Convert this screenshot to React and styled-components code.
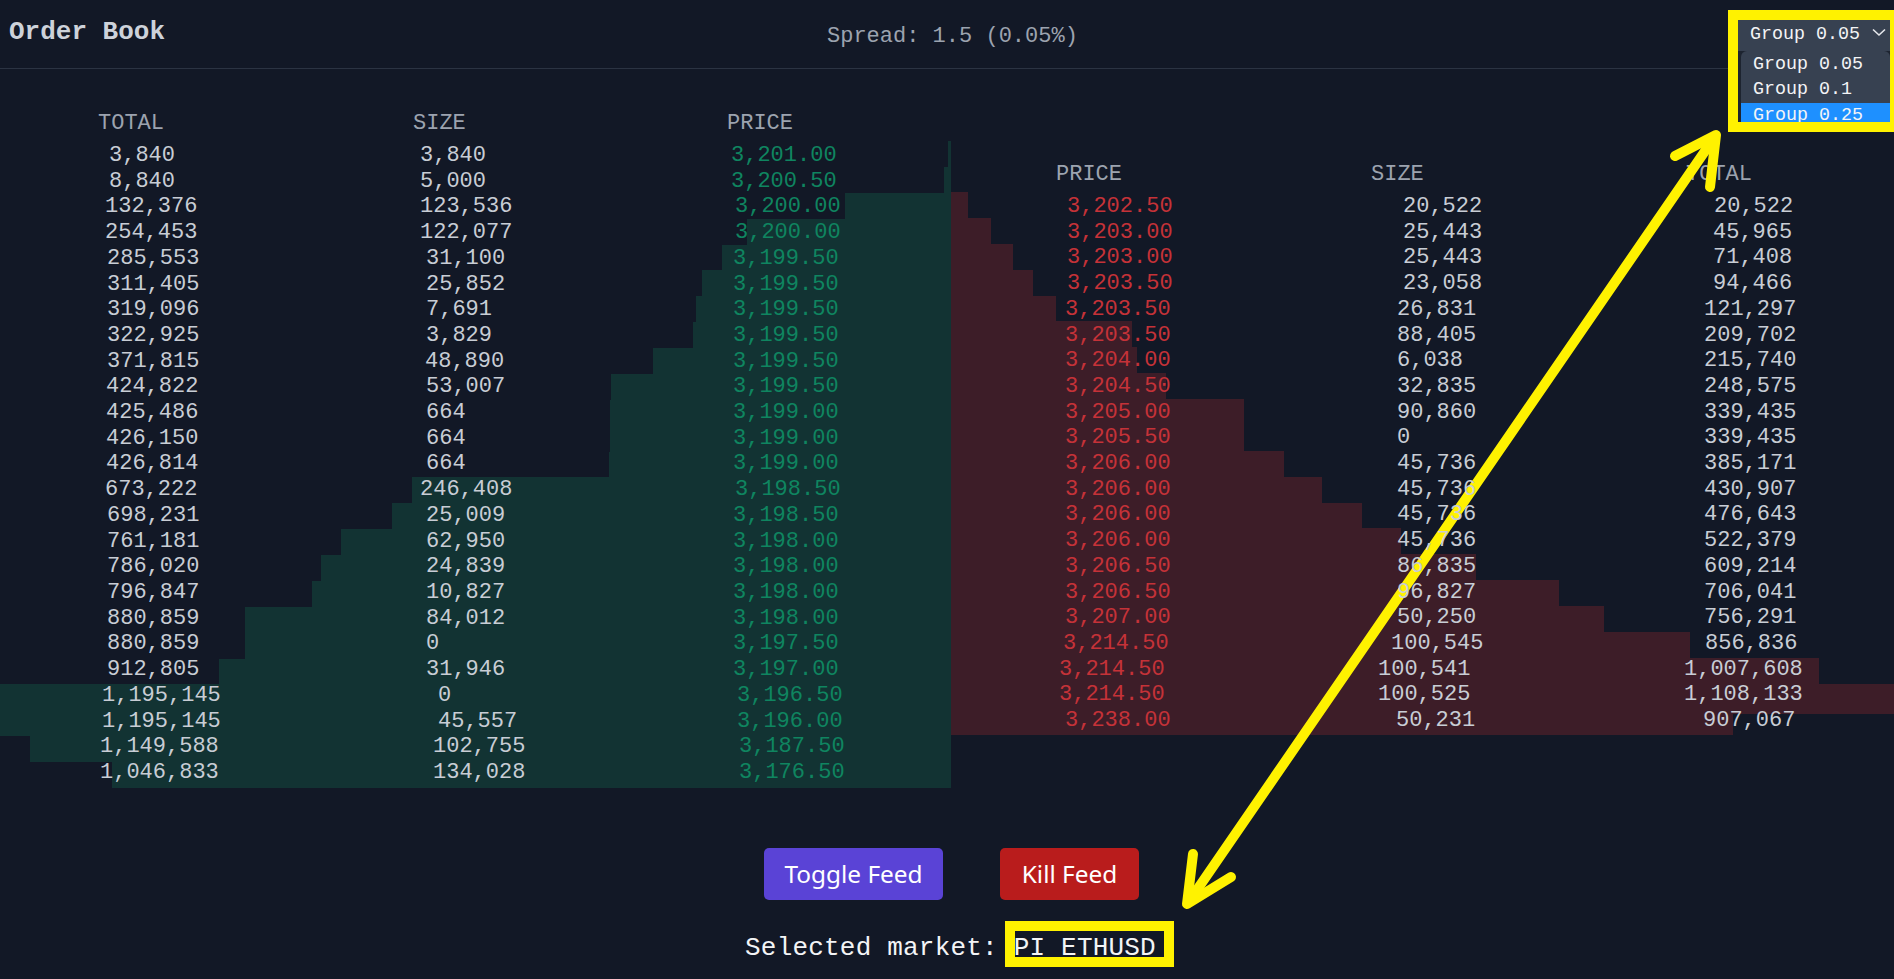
import React from 'react'
import styled, { createGlobalStyle } from 'styled-components'

const GlobalStyle = createGlobalStyle`
  html, body { margin: 0; padding: 0; background: #121826; }
  body { width: 1894px; height: 979px; overflow: hidden; }
`

const MONO = `"Liberation Mono", "DejaVu Sans Mono", monospace`

const ROW_H = 25.88
// the text lines step a little tighter than the depth bars
const TEXT_DRIFT = 0.17

// [total, size, price, text x for each column, bar width]
const bids = [
  ['3,840', '3,840', '3,201.00', 109, 420, 731, 3],
  ['8,840', '5,000', '3,200.50', 109, 420, 731, 7],
  ['132,376', '123,536', '3,200.00', 105, 420, 735, 106],
  ['254,453', '122,077', '3,200.00', 105, 420, 735, 204],
  ['285,553', '31,100', '3,199.50', 107, 426, 733, 229],
  ['311,405', '25,852', '3,199.50', 107, 426, 733, 249],
  ['319,096', '7,691', '3,199.50', 107, 426, 733, 255],
  ['322,925', '3,829', '3,199.50', 107, 426, 733, 258],
  ['371,815', '48,890', '3,199.50', 107, 425, 733, 298],
  ['424,822', '53,007', '3,199.50', 106, 426, 733, 340],
  ['425,486', '664', '3,199.00', 106, 426, 733, 341],
  ['426,150', '664', '3,199.00', 106, 426, 733, 341],
  ['426,814', '664', '3,199.00', 106, 426, 733, 342],
  ['673,222', '246,408', '3,198.50', 105, 420, 735, 539],
  ['698,231', '25,009', '3,198.50', 107, 426, 733, 559],
  ['761,181', '62,950', '3,198.00', 107, 426, 733, 610],
  ['786,020', '24,839', '3,198.00', 107, 426, 733, 630],
  ['796,847', '10,827', '3,198.00', 107, 426, 733, 639],
  ['880,859', '84,012', '3,198.00', 107, 426, 733, 706],
  ['880,859', '0', '3,197.50', 107, 426, 733, 706],
  ['912,805', '31,946', '3,197.00', 107, 426, 733, 732],
  ['1,195,145', '0', '3,196.50', 102, 438, 737, 951],
  ['1,195,145', '45,557', '3,196.00', 102, 438, 737, 951],
  ['1,149,588', '102,755', '3,187.50', 100, 433, 739, 921],
  ['1,046,833', '134,028', '3,176.50', 100, 433, 739, 839],
]

// [price, size, total, text x for each column, bar width]
const asks = [
  ['3,202.50', '20,522', '20,522', 116, 452, 763, 17],
  ['3,203.00', '25,443', '45,965', 116, 452, 762, 40],
  ['3,203.00', '25,443', '71,408', 116, 452, 762, 62],
  ['3,203.50', '23,058', '94,466', 116, 452, 762, 82],
  ['3,203.50', '26,831', '121,297', 114, 446, 753, 105],
  ['3,203.50', '88,405', '209,702', 114, 446, 753, 181],
  ['3,204.00', '6,038', '215,740', 114, 446, 753, 186],
  ['3,204.50', '32,835', '248,575', 114, 446, 753, 215],
  ['3,205.00', '90,860', '339,435', 114, 446, 753, 293],
  ['3,205.50', '0', '339,435', 114, 446, 753, 293],
  ['3,206.00', '45,736', '385,171', 114, 446, 753, 333],
  ['3,206.00', '45,736', '430,907', 114, 446, 753, 371],
  ['3,206.00', '45,736', '476,643', 114, 446, 753, 411],
  ['3,206.00', '45,736', '522,379', 114, 446, 753, 450],
  ['3,206.50', '86,835', '609,214', 114, 446, 753, 525],
  ['3,206.50', '96,827', '706,041', 114, 446, 753, 608],
  ['3,207.00', '50,250', '756,291', 114, 446, 753, 653],
  ['3,214.50', '100,545', '856,836', 112, 440, 754, 739],
  ['3,214.50', '100,541', '1,007,608', 108, 427, 733, 868],
  ['3,214.50', '100,525', '1,108,133', 108, 427, 733, 943, true],
  ['3,238.00', '50,231', '907,067', 114, 445, 752, 782],
]

const Page = styled.div`
  width: 1894px;
  height: 979px;
  background: #121826;
  color: #c8cdd5;
  font-family: ${MONO};
  position: relative;
  overflow: hidden;
`

const TopBar = styled.header`
  height: 69px;
  box-sizing: border-box;
  border-bottom: 1px solid #2b3342;
  display: flex;
  align-items: flex-start;
  padding-left: 9px;
`

const Title = styled.h1`
  margin: 17px 0 0;
  width: 818px;
  font-size: 26px;
  line-height: 30px;
  font-weight: 700;
  color: #cdd2da;
`

const Spread = styled.div`
  margin-top: 24px;
  font-size: 22px;
  line-height: 26px;
  color: #9ca3af;
`

const Book = styled.section`
  display: flex;
  align-items: flex-start;
  padding-top: 40px;
`

const BidColumn = styled.div`
  width: 951px;
  flex: none;
`

const AskColumn = styled.div`
  flex: 1;
  margin-top: 51px;
  min-width: 0;
`

const HeaderRow = styled.div`
  display: grid;
  grid-template-columns: ${p => p.$cols};
  padding-left: ${p => p.$left}px;
  height: 32px;
  font-size: 22px;
  line-height: 29px;
  color: #9ca3af;
`

const Row = styled.div`
  position: relative;
  height: ${ROW_H}px;
  display: grid;
  grid-template-columns: ${p => p.$cols};
  padding-left: ${p => p.$left}px;
  font-size: 22px;
  line-height: 29px;
`

const Bar = styled.div`
  position: absolute;
  top: 0;
  height: ${p => (p.$tall ? '30px' : '100%')};
  ${p => (p.$side === 'bid' ? 'right: 0;' : 'left: 0;')}
  background: ${p => (p.$side === 'bid' ? '#123333' : '#3d1d28')};
`

const Cell = styled.span`
  position: relative;
  z-index: 1;
  white-space: nowrap;
  color: ${p => p.$color || '#c8cdd5'};
`

const Buttons = styled.div`
  display: flex;
  justify-content: center;
  gap: 57px;
  margin: 60px 0 0 9px;
`

const FeedButton = styled.button`
  border: 0;
  height: 52px;
  width: ${p => p.$width}px;
  padding: 0;
  border-radius: 5px;
  background: ${p => p.$bg};
  color: #fff;
  font-family: "Noto Sans", "Open Sans", sans-serif;
  font-size: 24.4px;
  line-height: 30px;
`

const MarketLine = styled.div`
  margin: 30px 0 0 7px;
  text-align: center;
  font-size: 26px;
  line-height: 36px;
  letter-spacing: 0.2px;
  color: #f3f4f6;
  white-space: pre;
`

const MarketName = styled.span`
  position: relative;
  &::after {
    content: '';
    position: absolute;
    left: -8.5px;
    right: -18.5px;
    top: -12px;
    height: 26px;
    border: 10px solid #fff200;
    pointer-events: none;
  }
`

const GroupBox = styled.div`
  position: absolute;
  top: 10px;
  left: 1728px;
  width: 166px;
  height: 122px;
  box-sizing: border-box;
  border: 10px solid #fff200;
  border-right-width: 4px;
  overflow: hidden;
  background: #1d2430;
`

const GroupTrigger = styled.div`
  height: 31px;
  display: flex;
  align-items: flex-start;
  justify-content: space-between;
  padding: 4px 3px 0 12px;
  box-sizing: border-box;
  background: #374151;
  color: #f3f4f6;
  font-size: 18.33px;
  line-height: 22px;
`

const ChevronIcon = styled.svg`
  margin-top: 1px;
`

const GroupList = styled.ul`
  list-style: none;
  margin: 0 0 0 3px;
  padding: 0;
  height: 71px;
  background: #374151;
  border-radius: 6px 6px 0 0;
  overflow: hidden;
  padding-top: 1px;
  box-sizing: border-box;
`

const GroupOption = styled.li`
  height: 25.4px;
  line-height: 26px;
  padding-left: 12px;
  font-size: 18.33px;
  color: #f3f4f6;
  background: ${p => (p.$active ? '#1e90ff' : 'transparent')};
`

const Overlay = styled.svg`
  position: absolute;
  inset: 0;
  pointer-events: none;
`

function BookRow({ side, index, text, left, cols, bar, tall }) {
  return (
    <Row $left={left} $cols={cols}>
      <Bar $side={side} $tall={tall} style={{ width: bar }} />
      {text.map((t, i) => (
        <Cell
          key={i}
          $color={side === 'bid' && i === 2 ? '#0f8560' : side === 'ask' && i === 0 ? '#c53238' : undefined}
          style={{ top: -index * TEXT_DRIFT }}
        >
          {t}
        </Cell>
      ))}
    </Row>
  )
}

export default function App() {
  return (
    <Page>
      <GlobalStyle />
      <TopBar>
        <Title>Order Book</Title>
        <Spread>Spread: 1.5 (0.05%)</Spread>
      </TopBar>

      <GroupBox>
        <GroupTrigger>
          Group 0.05
          <ChevronIcon width="16" height="16" viewBox="0 0 16 16" fill="none" stroke="#e5e7eb" strokeWidth="1.6">
            <path d="M2 4.5 L8 10 L14 4.5" />
          </ChevronIcon>
        </GroupTrigger>
        <GroupList>
          <GroupOption>Group 0.05</GroupOption>
          <GroupOption>Group 0.1</GroupOption>
          <GroupOption $active>Group 0.25</GroupOption>
        </GroupList>
      </GroupBox>

      <Book>
        <BidColumn>
          <HeaderRow $left={98} $cols="315px 314px 1fr">
            <span>TOTAL</span>
            <span>SIZE</span>
            <span>PRICE</span>
          </HeaderRow>
          {bids.map((b, i) => (
            <BookRow
              key={i}
              index={i}
              side="bid"
              text={b.slice(0, 3)}
              left={b[3]}
              cols={`${b[4] - b[3]}px ${b[5] - b[4]}px 1fr`}
              bar={b[6]}
            />
          ))}
        </BidColumn>
        <AskColumn>
          <HeaderRow $left={105} $cols="315px 315px 1fr">
            <span>PRICE</span>
            <span>SIZE</span>
            <span>TOTAL</span>
          </HeaderRow>
          {asks.map((a, i) => (
            <BookRow
              key={i}
              index={i}
              side="ask"
              text={a.slice(0, 3)}
              left={a[3]}
              cols={`${a[4] - a[3]}px ${a[5] - a[4]}px 1fr`}
              bar={a[6]}
              tall={a[7]}
            />
          ))}
        </AskColumn>
      </Book>

      <Buttons>
        <FeedButton $bg="#5a43d6" $width={179}>Toggle Feed</FeedButton>
        <FeedButton $bg="#b91c1c" $width={139}>Kill Feed</FeedButton>
      </Buttons>

      <MarketLine>
        Selected market: <MarketName>PI_ETHUSD</MarketName>
      </MarketLine>

      <Overlay width="1894" height="979" viewBox="0 0 1894 979" fill="none" stroke="#fff200" strokeWidth="10" strokeLinecap="round" strokeLinejoin="round">
        <path d="M1714 138 L1190 900" />
        <path d="M1675 156 L1716 135 L1710 187" />
        <path d="M1193 854 L1187 904 L1231 877" />
      </Overlay>
    </Page>
  )
}
